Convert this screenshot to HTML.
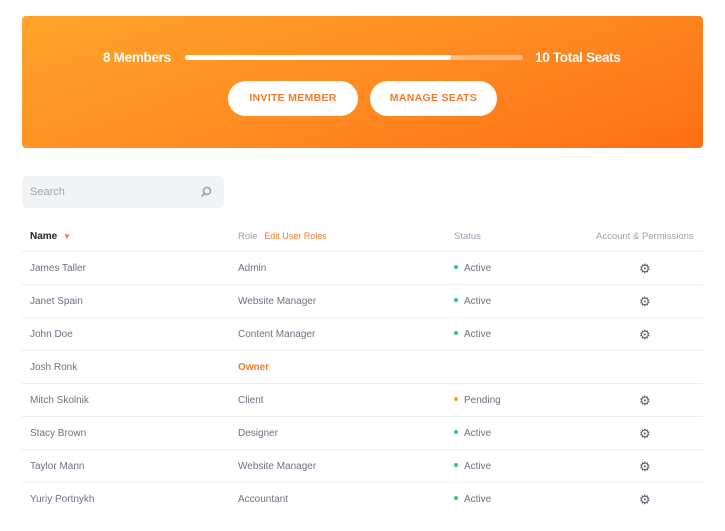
<!DOCTYPE html><html><head><style>
body{margin:0;width:725px;height:531px;background:#fff;font-family:"Liberation Sans",sans-serif;position:relative;overflow:hidden}
.ban{position:absolute;left:22px;top:16px;width:681px;height:132px;border-radius:4px;background:linear-gradient(160deg,#ffa42b 0%,#ff8c22 50%,#ff6e16 100%)}
.t{position:absolute;color:#fff;font-size:13.5px;font-weight:bold;top:50px;letter-spacing:-0.3px}
.bar{position:absolute;left:185px;top:55px;width:338px;height:5px;border-radius:3px;background:rgba(255,255,255,.4)}
.bar i{display:block;width:266px;height:5px;border-radius:3px;background:#fff}
.btn{position:absolute;top:81px;height:35px;border-radius:18px;background:#fff;color:#f47b2c;font-size:10.5px;font-weight:bold;letter-spacing:.3px;text-align:center;line-height:35px}
.search{position:absolute;left:22px;top:176px;width:202px;height:32px;border-radius:5px;background:#f2f3f5;color:#a0a6b2;font-size:11px;line-height:32px;text-indent:8px}
.row{position:absolute;left:22px;width:681px;height:33px;border-bottom:1px solid #eceef1;font-size:10px;color:#6b7280}
.row span{position:absolute;top:12px}
.h span{color:#9aa0aa;font-size:9.5px;top:13px}
.dot{display:inline-block;width:4px;height:4px;border-radius:2px;background:#2ecc71;margin-right:6px;vertical-align:2px}
.g{font-size:13px;color:#555c68}
</style></head><body>
<div class="ban"></div>
<div class="t" style="left:103px">8 Members</div>
<div class="bar"><i></i></div>
<div class="t" style="left:535px">10 Total Seats</div>
<div class="btn" style="left:228px;width:130px">INVITE MEMBER</div>
<div class="btn" style="left:370px;width:127px">MANAGE SEATS</div>
<div class="search">Search<svg style="position:absolute;left:178px;top:10px" width="12" height="12" viewBox="0 0 12 12"><circle cx="7" cy="5" r="3.5" fill="none" stroke="#9aa0aa" stroke-width="1.6"/><path d="M4.5 7.5L1.5 10.5" stroke="#9aa0aa" stroke-width="1.8"/></svg></div>
<div class="row h" style="top:218px"><span style="left:8px;color:#222;font-weight:bold;font-size:10px">Name <b style="color:#f47b2c;font-size:8px;margin-left:3px">▼</b></span><span style="left:216px">Role <b style="color:#f47b2c;font-weight:normal;font-size:9px;margin-left:4px">Edit User Roles</b></span><span style="left:432px">Status</span><span style="left:574px">Account &amp; Permissions</span></div>
<div class="row" style="top:251px"><span style="left:8px">James Taller</span><span style="left:216px">Admin</span><span style="left:432px"><i class="dot"></i>Active</span><span class="g" style="left:617px;top:10px">⚙</span></div>
<div class="row" style="top:284px"><span style="left:8px">Janet Spain</span><span style="left:216px">Website Manager</span><span style="left:432px"><i class="dot"></i>Active</span><span class="g" style="left:617px;top:10px">⚙</span></div>
<div class="row" style="top:317px"><span style="left:8px">John Doe</span><span style="left:216px">Content Manager</span><span style="left:432px"><i class="dot"></i>Active</span><span class="g" style="left:617px;top:10px">⚙</span></div>
<div class="row" style="top:350px"><span style="left:8px">Josh Ronk</span><span style="left:216px;color:#f47b2c;font-weight:bold">Owner</span></div>
<div class="row" style="top:383px"><span style="left:8px">Mitch Skolnik</span><span style="left:216px">Client</span><span style="left:432px"><i class="dot" style="background:#f5a623"></i>Pending</span><span class="g" style="left:617px;top:10px">⚙</span></div>
<div class="row" style="top:416px"><span style="left:8px">Stacy Brown</span><span style="left:216px">Designer</span><span style="left:432px"><i class="dot"></i>Active</span><span class="g" style="left:617px;top:10px">⚙</span></div>
<div class="row" style="top:449px"><span style="left:8px">Taylor Mann</span><span style="left:216px">Website Manager</span><span style="left:432px"><i class="dot"></i>Active</span><span class="g" style="left:617px;top:10px">⚙</span></div>
<div class="row" style="top:482px;border-bottom:none"><span style="left:8px">Yuriy Portnykh</span><span style="left:216px">Accountant</span><span style="left:432px"><i class="dot"></i>Active</span><span class="g" style="left:617px;top:10px">⚙</span></div>
</body></html>
